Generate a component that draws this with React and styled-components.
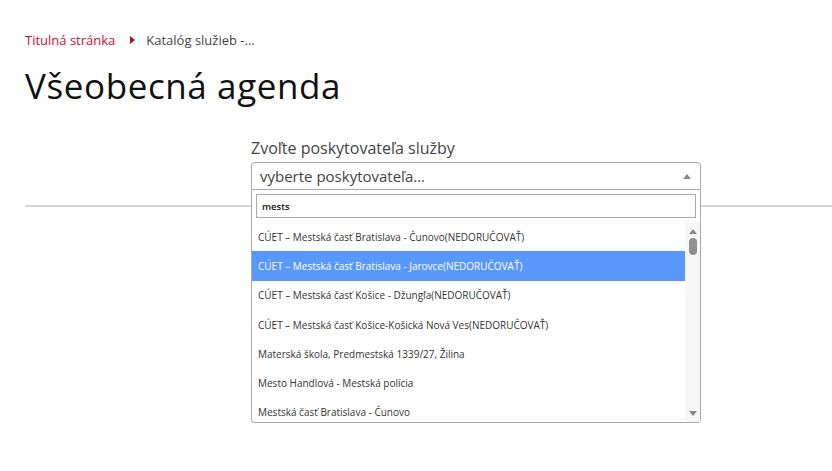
import React from 'react';
import styled, { createGlobalStyle } from 'styled-components';

const GlobalStyle = createGlobalStyle`
  html, body {
    margin: 0;
    padding: 0;
    background: #fff;
  }
  body {
    font-family: 'Open Sans', 'Noto Sans', sans-serif;
    color: #222;
  }
`;

const options = [
  'CÚET – Mestská časť Bratislava - Čunovo(NEDORUČOVAŤ)',
  'CÚET – Mestská časť Bratislava - Jarovce(NEDORUČOVAŤ)',
  'CÚET – Mestská časť Košice - Džungľa(NEDORUČOVAŤ)',
  'CÚET – Mestská časť Košice-Košická Nová Ves(NEDORUČOVAŤ)',
  'Materská škola, Predmestská 1339/27, Žilina',
  'Mesto Handlová - Mestská polícia',
  'Mestská časť Bratislava - Čunovo',
];

const Page = styled.div`
  width: 832px;
  height: 471px;
  overflow: hidden;
  padding: 31px 0 0 25px;
  box-sizing: border-box;
`;

const Breadcrumb = styled.nav`
  display: flex;
  align-items: center;
  gap: 11px;
  font-size: 13px;
  line-height: 18px;
`;

const CrumbLink = styled.a`
  color: #c8102e;
  text-decoration: none;
`;

const CrumbArrow = styled.span`
  width: 0;
  height: 0;
  margin: 0 0 0 4px;
  border-top: 4px solid transparent;
  border-bottom: 4px solid transparent;
  border-left: 5px solid #a20d28;
`;

const CrumbCurrent = styled.span`
  color: #444;
`;

const Title = styled.h1`
  margin: 14px 0 0;
  font-size: 35px;
  font-weight: 400;
  line-height: 46px;
  letter-spacing: 0.6px;
  color: #111;
`;

const FormArea = styled.div`
  padding: 29px 0 0 226px;
`;

const Label = styled.label`
  display: block;
  font-size: 16px;
  line-height: 20px;
  color: #444;
  margin-bottom: 4px;
`;

const SelectWrap = styled.div`
  position: relative;
  width: 450px;
`;

const SelectBox = styled.div`
  display: flex;
  align-items: center;
  justify-content: space-between;
  height: 28px;
  box-sizing: border-box;
  padding: 0 9px 0 8px;
  border: 1px solid #aaa;
  border-radius: 4px 4px 0 0;
  background: #fff;
  font-size: 15px;
  color: #444;
`;

const Caret = styled.span`
  width: 0;
  height: 0;
  border-left: 4px solid transparent;
  border-right: 4px solid transparent;
  border-${({ $dir }) => ($dir === 'up' ? 'bottom' : 'top')}: 5px solid #888;
`;

const Divider = styled.hr`
  margin: 15px 0 0;
  border: none;
  border-top: 2px solid #d4d4d4;
`;

const Dropdown = styled.div`
  position: absolute;
  top: 100%;
  left: 0;
  width: 450px;
  box-sizing: border-box;
  border: 1px solid #aaa;
  border-top: none;
  border-radius: 0 0 4px 4px;
  background: #fff;
  z-index: 10;
`;

const SearchRow = styled.div`
  padding: 4px;
`;

const SearchInput = styled.input`
  display: block;
  width: 100%;
  height: 24px;
  box-sizing: border-box;
  border: 1px solid #aaa;
  padding: 0 5px;
  font-family: 'Open Sans', sans-serif;
  font-size: 9.5px;
  font-weight: 600;
  color: #111;
  outline: none;
`;

const ListArea = styled.div`
  display: flex;
  height: 200px;
  overflow: hidden;
`;

const OptionList = styled.ul`
  flex: 1;
  margin: 0;
  padding: 0;
  list-style: none;
`;

const Option = styled.li`
  height: 29.3px;
  display: flex;
  align-items: center;
  padding: 0 6px;
  font-size: 10px;
  white-space: nowrap;
  color: ${({ $active }) => ($active ? '#fff' : '#333')};
  background: ${({ $active }) => ($active ? '#5897fb' : 'transparent')};
`;

const Scrollbar = styled.div`
  width: 15px;
  display: flex;
  flex-direction: column;
  align-items: center;
  background: #f7f7f7;
  padding: 7px 0 6px;
  box-sizing: border-box;
`;

const Thumb = styled.div`
  width: 8px;
  height: 17px;
  margin-top: 4px;
  border-radius: 4px;
  background: #8f8f8f;
`;

const Spacer = styled.div`
  flex: 1;
`;

export default function App() {
  return (
    <>
      <GlobalStyle />
      <Page>
        <Breadcrumb>
          <CrumbLink href="#">Titulná stránka</CrumbLink>
          <CrumbArrow />
          <CrumbCurrent>Katalóg služieb -...</CrumbCurrent>
        </Breadcrumb>
        <Title>Všeobecná agenda</Title>
        <FormArea>
          <Label>Zvoľte poskytovateľa služby</Label>
          <SelectWrap>
            <SelectBox>
              <span>vyberte poskytovateľa...</span>
              <Caret $dir="up" />
            </SelectBox>
            <Dropdown>
              <SearchRow>
                <SearchInput defaultValue="mests" />
              </SearchRow>
              <ListArea>
                <OptionList>
                  {options.map((o, i) => (
                    <Option key={o} $active={i === 1}>{o}</Option>
                  ))}
                </OptionList>
                <Scrollbar>
                  <Caret $dir="up" />
                  <Thumb />
                  <Spacer />
                  <Caret $dir="down" />
                </Scrollbar>
              </ListArea>
            </Dropdown>
          </SelectWrap>
        </FormArea>
        <Divider />
      </Page>
    </>
  );
}
